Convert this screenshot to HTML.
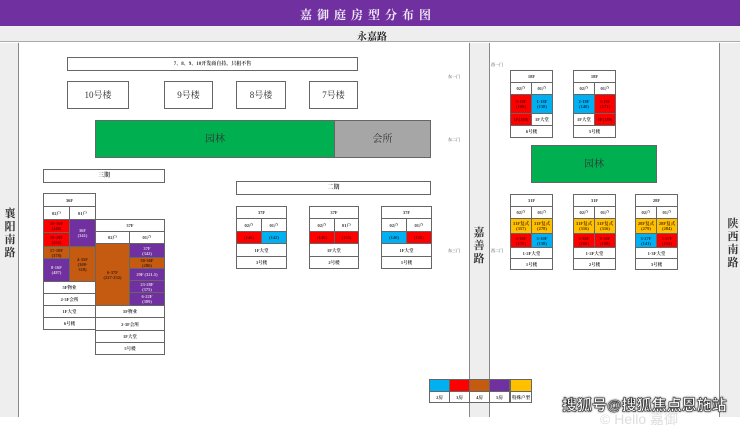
<!DOCTYPE html>
<html><head><meta charset="utf-8"><style>
*{margin:0;padding:0;box-sizing:border-box}
body{width:740px;height:417px;position:relative;overflow:hidden;background:#fff;font-family:"Liberation Serif","Noto Serif CJK SC","Noto Sans CJK SC",serif;color:#222}
.a{position:absolute}
.c{position:absolute;border:1px solid #666;display:flex;align-items:center;justify-content:center;text-align:center;font-size:4.5px;line-height:5px;font-weight:bold;background:#fff;color:#333}
.r{background:#ff0000;color:#600}.b{background:#00b0f0;color:#035}.o{background:#c55a11;color:#421}.p{background:#7030a0;color:#dcd}.y{background:#ffc000;color:#530}
.v{position:absolute;font-size:11px;line-height:13px;width:14px;text-align:center;color:#333;font-weight:bold}
.g{font-size:4px;color:#333}
</style></head><body>
<div class="a" style="left:0;top:0;width:740px;height:26px;background:#7030a0"></div>
<div class="a" style="left:300px;top:6px;font-size:12px;color:#f0e8f8;letter-spacing:5px;font-weight:bold">嘉御庭房型分布图</div>
<div class="a" style="left:0;top:26px;width:740px;height:16px;background:#eeeeee;border-bottom:1px solid #aaa"></div>
<div class="a" style="left:357px;top:28px;font-size:10px;font-weight:bold;color:#222">永嘉路</div>
<div class="a" style="left:0;top:43px;width:19px;height:374px;background:#eeeeee;border-right:1px solid #888"></div>
<div class="a" style="left:469px;top:43px;width:21px;height:374px;background:#eeeeee;border-left:1px solid #888;border-right:1px solid #888"></div>
<div class="a" style="left:719px;top:43px;width:21px;height:374px;background:#eeeeee;border-left:1px solid #888"></div>
<div class="v" style="left:3px;top:208px">襄<br>阳<br>南<br>路</div>
<div class="v" style="left:472px;top:227px">嘉<br>善<br>路</div>
<div class="v" style="left:726px;top:218px">陕<br>西<br>南<br>路</div>

<div class="c" style="left:67px;top:57px;width:291px;height:14px;font-size:5px">7、8、9、10开发商自持，只租不售</div>
<div class="c" style="left:67px;top:81px;width:62px;height:28px;font-size:9px;font-weight:normal">10号楼</div>
<div class="c" style="left:164px;top:81px;width:49px;height:28px;font-size:9px;font-weight:normal">9号楼</div>
<div class="c" style="left:236px;top:81px;width:50px;height:28px;font-size:9px;font-weight:normal">8号楼</div>
<div class="c" style="left:309px;top:81px;width:49px;height:28px;font-size:9px;font-weight:normal">7号楼</div>
<div class="c" style="left:95px;top:120px;width:240px;height:38px;background:#00b050;font-size:10px;font-weight:normal;color:#333">园林</div>
<div class="c" style="left:334px;top:120px;width:97px;height:38px;background:#a6a6a6;font-size:10px;font-weight:normal;color:#333">会所</div>
<div class="a g" style="left:448px;top:74px">东一门</div>
<div class="a g" style="left:448px;top:137px">东二门</div>
<div class="a g" style="left:448px;top:248px">东三门</div>
<div class="a g" style="left:491px;top:62px">西一门</div>
<div class="a g" style="left:491px;top:248px">西二门</div>

<div class="c" style="left:43px;top:169px;width:122px;height:14px;font-size:6px">三期</div>
<!-- 6号楼 -->
<div class="c" style="left:43px;top:193px;width:53px;height:14px">36F</div>
<div class="c" style="left:43px;top:206px;width:27px;height:14px">02户</div>
<div class="c" style="left:69px;top:206px;width:27px;height:14px">01户</div>
<div class="c r" style="left:43px;top:219px;width:27px;height:14px">30-36F<br>(248)</div>
<div class="c r" style="left:43px;top:232px;width:27px;height:15px">19-29F<br>(252)</div>
<div class="c o" style="left:43px;top:246px;width:27px;height:13px">17-18F<br>(378)</div>
<div class="c p" style="left:43px;top:258px;width:27px;height:24px">8-16F<br>(487)</div>
<div class="c p" style="left:69px;top:219px;width:27px;height:28px">36F<br>(341)</div>
<div class="c o" style="left:69px;top:246px;width:27px;height:36px">4-35F<br>(308-<br>318)</div>
<div class="c" style="left:43px;top:281px;width:53px;height:13px">5F物业</div>
<div class="c" style="left:43px;top:293px;width:53px;height:13px">2-3F会所</div>
<div class="c" style="left:43px;top:305px;width:53px;height:13px">1F大堂</div>
<div class="c" style="left:43px;top:317px;width:53px;height:13px">6号楼</div>
<!-- 5号楼 -->
<div class="c" style="left:95px;top:219px;width:70px;height:13px">37F</div>
<div class="c" style="left:95px;top:231px;width:35px;height:13px">02户</div>
<div class="c" style="left:129px;top:231px;width:36px;height:13px">01户</div>
<div class="c o" style="left:95px;top:243px;width:35px;height:63px">6-37F<br>(227-232)</div>
<div class="c p" style="left:129px;top:243px;width:36px;height:15px">37F<br>(342)</div>
<div class="c o" style="left:129px;top:257px;width:36px;height:12px">30-36F<br>(286)</div>
<div class="c p" style="left:129px;top:268px;width:36px;height:13px">29F (321.5)</div>
<div class="c p" style="left:129px;top:280px;width:36px;height:13px">23-28F<br>(375)</div>
<div class="c p" style="left:129px;top:292px;width:36px;height:14px">6-22F<br>(389)</div>
<div class="c" style="left:95px;top:305px;width:70px;height:13px">5F物业</div>
<div class="c" style="left:95px;top:317px;width:70px;height:14px">2-3F会所</div>
<div class="c" style="left:95px;top:330px;width:70px;height:13px">1F大堂</div>
<div class="c" style="left:95px;top:342px;width:70px;height:13px">5号楼</div>

<div class="c" style="left:236px;top:181px;width:195px;height:14px;font-size:6px">二期</div>
<!-- phase 2 buildings -->
<div class="c" style="left:236px;top:206px;width:51px;height:13px">37F</div>
<div class="c" style="left:236px;top:218px;width:26px;height:14px">02户</div>
<div class="c" style="left:261px;top:218px;width:26px;height:14px">01户</div>
<div class="c r" style="left:236px;top:231px;width:26px;height:13px">(146)</div>
<div class="c b" style="left:261px;top:231px;width:26px;height:13px">(142)</div>
<div class="c" style="left:236px;top:243px;width:51px;height:14px">1F大堂</div>
<div class="c" style="left:236px;top:256px;width:51px;height:13px">3号楼</div>

<div class="c" style="left:309px;top:206px;width:50px;height:13px">37F</div>
<div class="c" style="left:309px;top:218px;width:26px;height:14px">02户</div>
<div class="c" style="left:334px;top:218px;width:25px;height:14px">01户</div>
<div class="c r" style="left:309px;top:231px;width:26px;height:13px">(146)</div>
<div class="c r" style="left:334px;top:231px;width:25px;height:13px">(155)</div>
<div class="c" style="left:309px;top:243px;width:50px;height:14px">1F大堂</div>
<div class="c" style="left:309px;top:256px;width:50px;height:13px">2号楼</div>

<div class="c" style="left:381px;top:206px;width:51px;height:13px">37F</div>
<div class="c" style="left:381px;top:218px;width:26px;height:14px">02户</div>
<div class="c" style="left:406px;top:218px;width:26px;height:14px">01户</div>
<div class="c b" style="left:381px;top:231px;width:26px;height:13px">(140)</div>
<div class="c r" style="left:406px;top:231px;width:26px;height:13px">(155)</div>
<div class="c" style="left:381px;top:243px;width:51px;height:14px">1F大堂</div>
<div class="c" style="left:381px;top:256px;width:51px;height:13px">1号楼</div>

<!-- right upper -->
<div class="c" style="left:510px;top:70px;width:43px;height:13px">18F</div>
<div class="c" style="left:510px;top:82px;width:22px;height:13px">02户</div>
<div class="c" style="left:531px;top:82px;width:22px;height:13px">01户</div>
<div class="c r" style="left:510px;top:94px;width:22px;height:20px">3-18F<br>(180)</div>
<div class="c b" style="left:531px;top:94px;width:22px;height:20px">1-18F<br>(138)</div>
<div class="c r" style="left:510px;top:113px;width:22px;height:13px">1F(180)</div>
<div class="c" style="left:531px;top:113px;width:22px;height:13px">1F大堂</div>
<div class="c" style="left:510px;top:125px;width:43px;height:13px">6号楼</div>

<div class="c" style="left:573px;top:70px;width:43px;height:13px">18F</div>
<div class="c" style="left:573px;top:82px;width:22px;height:13px">02户</div>
<div class="c" style="left:594px;top:82px;width:22px;height:13px">01户</div>
<div class="c b" style="left:573px;top:94px;width:22px;height:20px">2-18F<br>(140)</div>
<div class="c r" style="left:594px;top:94px;width:22px;height:20px">3-18F<br>(171)</div>
<div class="c" style="left:573px;top:113px;width:22px;height:13px">1F大堂</div>
<div class="c r" style="left:594px;top:113px;width:22px;height:13px">1F(180)</div>
<div class="c" style="left:573px;top:125px;width:43px;height:13px">5号楼</div>

<div class="c" style="left:531px;top:145px;width:126px;height:38px;background:#00b050;font-size:10px;font-weight:normal;color:#333">园林</div>

<!-- right lower -->
<div class="c" style="left:510px;top:194px;width:43px;height:13px">31F</div>
<div class="c" style="left:510px;top:206px;width:22px;height:13px">02户</div>
<div class="c" style="left:531px;top:206px;width:22px;height:13px">01户</div>
<div class="c y" style="left:510px;top:218px;width:22px;height:16px">31F复式<br>(357)</div>
<div class="c y" style="left:531px;top:218px;width:22px;height:16px">31F复式<br>(278)</div>
<div class="c r" style="left:510px;top:233px;width:22px;height:15px">3-30F<br>(178)</div>
<div class="c b" style="left:531px;top:233px;width:22px;height:15px">3-30F<br>(138)</div>
<div class="c" style="left:510px;top:247px;width:43px;height:12px">1-2F大堂</div>
<div class="c" style="left:510px;top:258px;width:43px;height:12px">1号楼</div>

<div class="c" style="left:573px;top:194px;width:43px;height:13px">31F</div>
<div class="c" style="left:573px;top:206px;width:22px;height:13px">02户</div>
<div class="c" style="left:594px;top:206px;width:22px;height:13px">01户</div>
<div class="c y" style="left:573px;top:218px;width:22px;height:16px">31F复式<br>(316)</div>
<div class="c y" style="left:594px;top:218px;width:22px;height:16px">31F复式<br>(316)</div>
<div class="c r" style="left:573px;top:233px;width:22px;height:15px">3-30F<br>(160)</div>
<div class="c r" style="left:594px;top:233px;width:22px;height:15px">3-30F<br>(158)</div>
<div class="c" style="left:573px;top:247px;width:43px;height:12px">1-2F大堂</div>
<div class="c" style="left:573px;top:258px;width:43px;height:12px">2号楼</div>

<div class="c" style="left:635px;top:194px;width:43px;height:13px">28F</div>
<div class="c" style="left:635px;top:206px;width:22px;height:13px">02户</div>
<div class="c" style="left:656px;top:206px;width:22px;height:13px">01户</div>
<div class="c y" style="left:635px;top:218px;width:22px;height:16px">28F复式<br>(279)</div>
<div class="c y" style="left:656px;top:218px;width:22px;height:16px">28F复式<br>(284)</div>
<div class="c b" style="left:635px;top:233px;width:22px;height:15px">3-27F<br>(141)</div>
<div class="c r" style="left:656px;top:233px;width:22px;height:15px">3-27F<br>(152)</div>
<div class="c" style="left:635px;top:247px;width:43px;height:12px">1-3F大堂</div>
<div class="c" style="left:635px;top:258px;width:43px;height:12px">3号楼</div>

<!-- legend -->
<div class="c b" style="left:429px;top:379px;width:21px;height:13px"></div>
<div class="c r" style="left:449px;top:379px;width:21px;height:13px"></div>
<div class="c o" style="left:469px;top:379px;width:21px;height:13px"></div>
<div class="c p" style="left:489px;top:379px;width:21px;height:13px"></div>
<div class="c y" style="left:510px;top:379px;width:22px;height:13px"></div>
<div class="c" style="left:429px;top:391px;width:21px;height:12px">2房</div>
<div class="c" style="left:449px;top:391px;width:21px;height:12px">3房</div>
<div class="c" style="left:469px;top:391px;width:21px;height:12px">4房</div>
<div class="c" style="left:489px;top:391px;width:21px;height:12px">5房</div>
<div class="c" style="left:510px;top:391px;width:22px;height:12px">特殊户型</div>

<div class="a" style="left:562px;top:394px;font-family:'Liberation Sans','Noto Sans CJK SC',sans-serif;font-size:15px;font-weight:bold;color:#fff;-webkit-text-stroke:0.6px #333;text-shadow:0 0 2px #000;white-space:nowrap">搜狐号@搜狐焦点恩施站</div>
<div class="a" style="left:600px;top:409px;font-family:'Liberation Sans',sans-serif;font-size:14px;color:#ddd;white-space:nowrap">© Hello 嘉御</div>
</body></html>
